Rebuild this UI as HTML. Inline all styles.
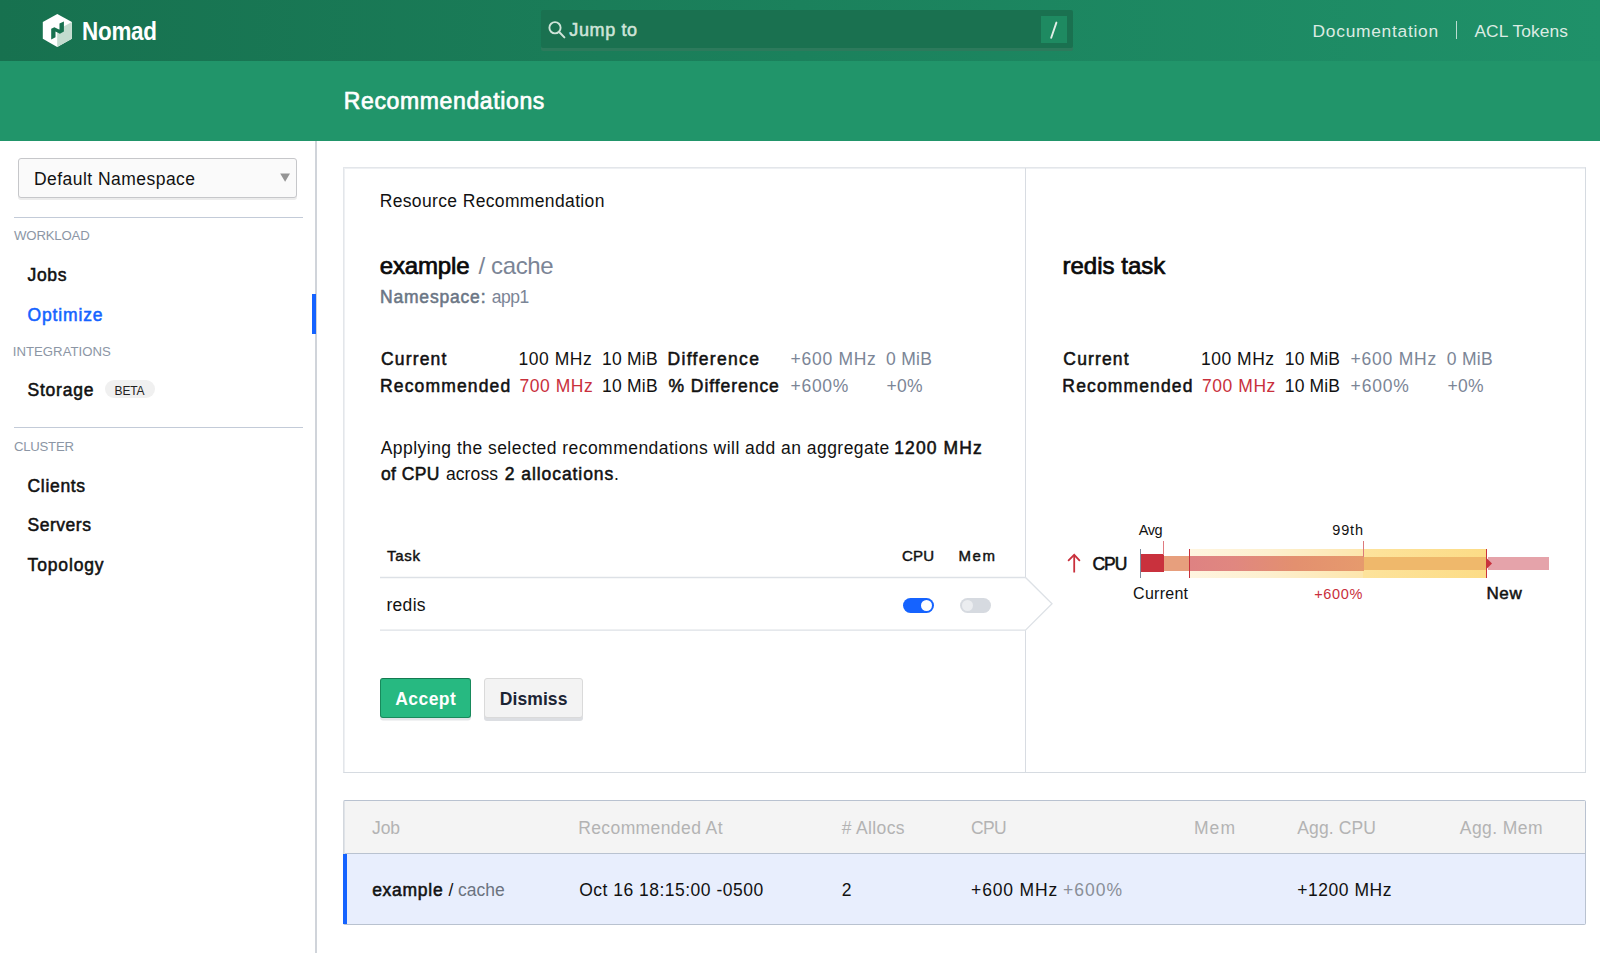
<!DOCTYPE html>
<html><head><meta charset="utf-8">
<style>
html,body{margin:0;padding:0;width:1600px;height:953px;overflow:hidden;background:#fff;}
body{position:relative;font-family:"Liberation Sans",sans-serif;}
.t{position:absolute;white-space:pre;line-height:1;}
.abs{position:absolute;}
</style></head><body>
<!-- top nav -->
<div class="abs" style="left:0;top:0;width:1600px;height:61px;background:linear-gradient(to right,#17714f,#1f9169);"></div>
<!-- secondary bar -->
<div class="abs" style="left:0;top:61px;width:1600px;height:80px;background:#21956a;"></div>
<!-- logo -->
<svg class="abs" style="left:40px;top:12px" width="36" height="38" viewBox="0 0 36 38">
  <polygon points="17.3,2 31.9,10 31.9,26.7 17.2,34.9 2.8,26.7 2.8,10" fill="#ffffff"/>
  <polygon points="17.2,18 31.9,10 31.9,26.7 17.2,34.9" fill="#c3dccf"/>
  <polygon points="11.2,16.7 14.4,15.2 19.5,17.7 19.5,11.6 23.9,9.4 23.9,19.5 19.9,21.7 15.5,19.6 15.5,25.3 11.2,27.5" fill="#17714f"/>
</svg>
<div class="abs" id="logo" style="left:81.5px;top:16px;color:#fff;font:bold 25.5px 'Liberation Sans',sans-serif;line-height:30px;transform:scaleX(0.88);transform-origin:0 0;letter-spacing:-0.3px">Nomad</div>
<!-- search -->
<div class="abs" style="left:541px;top:10px;width:532px;height:38px;background:#1a7150;border-radius:2px;box-shadow:0 3px 0 #2d7a5c;"></div>
<div class="abs" style="left:1041px;top:16px;width:26px;height:27px;background:#1e8a61;"></div>
<svg class="abs" style="left:1040px;top:16px" width="28" height="28" viewBox="0 0 28 28"><line x1="16.4" y1="6.6" x2="11.2" y2="21.8" stroke="#e2eee7" stroke-width="1.9" stroke-linecap="round"/></svg>
<svg class="abs" style="left:546px;top:19px" width="22" height="22" viewBox="0 0 22 22">
  <circle cx="9" cy="8.75" r="5.6" fill="none" stroke="#cfe4d9" stroke-width="1.9"/>
  <line x1="13.2" y1="13" x2="18.4" y2="18.4" stroke="#cfe4d9" stroke-width="2" stroke-linecap="round"/>
</svg>
<div class="abs" style="left:1455.5px;top:21px;width:1px;height:18px;background:rgba(255,255,255,0.7);"></div>

<!-- sidebar -->
<div class="abs" style="left:315px;top:141px;width:2px;height:812px;background:#d0d4da;"></div>
<div class="abs" style="left:312px;top:294px;width:4px;height:40px;background:#1563ff;"></div>
<div class="abs" style="left:18px;top:158.2px;width:276.6px;height:37.6px;background:#fafafa;border:1.5px solid #c6c7ca;border-radius:3px;box-shadow:0 2px 0 rgba(10,10,10,0.08);"></div>
<svg class="abs" style="left:278px;top:171px" width="14" height="12" viewBox="0 0 14 12"><polygon points="2.2,2.6 12,2.6 7.1,10.8" fill="#959595"/></svg>
<div class="abs" style="left:14px;top:217px;width:289px;height:1px;background:#c3cbd8;"></div>
<div class="abs" style="left:14px;top:427px;width:289px;height:1px;background:#c3cbd8;"></div>
<div class="abs" style="left:105px;top:380px;width:50px;height:18px;background:#f0f0f0;border-radius:9px;"></div>

<!-- card -->
<div class="abs" style="left:343px;top:167px;width:1241px;height:604px;border-top:1px solid #e3e6ea;border-left:1px solid #e3e6ea;border-right:1px solid #d6dbe1;border-bottom:1px solid #d6dbe1;box-shadow:inset 1px 1px 0 #eef0f3;"></div>
<div class="abs" style="left:1025px;top:168px;width:1px;height:604px;background:#d8dce2;"></div>
<!-- task table lines + arrow -->
<svg class="abs" style="left:0;top:0" width="1600" height="953">
  <polyline points="380,577.5 1025.5,577.5 1052,603.8 1025.5,630.2 380,630.2" fill="#fff" stroke="#dde1e6" stroke-width="1.3"/>
</svg>
<!-- toggles -->
<div class="abs" style="left:903px;top:598px;width:31px;height:15px;border-radius:8px;background:#1563ff;"></div>
<div class="abs" style="left:921px;top:600px;width:11px;height:11px;border-radius:50%;background:#fff;"></div>
<div class="abs" style="left:960px;top:598px;width:31px;height:15px;border-radius:8px;background:#d6dae0;"></div>
<div class="abs" style="left:962px;top:600px;width:11px;height:11px;border-radius:50%;background:#ebedf0;"></div>
<!-- buttons -->
<div class="abs" style="left:380px;top:678px;width:89px;height:38px;background:#27b981;border:1px solid #188a5c;border-top-color:#147a50;border-radius:3px;box-shadow:0 2.5px 0 #e3e5e8;"></div>
<div class="abs" style="left:484px;top:678px;width:97px;height:37.5px;background:#f3f3f3;border:1px solid #dadada;border-radius:3px;box-shadow:0 3px 0 #dcdee2;"></div>

<!-- chart -->
<svg class="abs" style="left:1060px;top:552px" width="24" height="24" viewBox="0 0 24 24">
  <path d="M14.2,3.2 L14.2,20.5" stroke="#c9303c" stroke-width="1.8" fill="none"/>
  <path d="M8.6,8.3 L14.2,2.8 L19.4,8.3" stroke="#c9303c" stroke-width="1.8" fill="none" stroke-linecap="round"/>
</svg>
<div class="abs" style="left:1190px;top:549px;width:173px;height:29px;background:linear-gradient(to right,#fff5e0,#fdf0cf 45%,#fde6ad);"></div>
<div class="abs" style="left:1363px;top:549px;width:124px;height:29px;background:linear-gradient(to right,#fde39c,#fcdc86);"></div>
<div class="abs" style="left:1164px;top:556px;width:26px;height:14.5px;background:#e79f7d;"></div>
<div class="abs" style="left:1190px;top:556px;width:174px;height:14.5px;background:linear-gradient(to right,#de8282,#e08780 25%,#e3906f 60%,#e69a6d);"></div>
<div class="abs" style="left:1364px;top:557px;width:123px;height:12.7px;background:#efb86b;"></div>
<div class="abs" style="left:1140px;top:554px;width:24px;height:18px;background:#c9313d;"></div>
<div class="abs" style="left:1139.5px;top:549px;width:1.2px;height:29px;background:#7d8a9c;"></div>
<div class="abs" style="left:1163px;top:541px;width:1px;height:14px;background:#e07a80;"></div>
<div class="abs" style="left:1189px;top:549px;width:1px;height:29px;background:#c9313d;"></div>
<div class="abs" style="left:1363px;top:541px;width:1px;height:16px;background:#dc7a7c;"></div>
<div class="abs" style="left:1486px;top:549px;width:1px;height:29px;background:#c9313d;"></div>
<div class="abs" style="left:1487.5px;top:557px;width:61.5px;height:13px;background:#e5a3aa;"></div>
<svg class="abs" style="left:1487px;top:557px" width="6" height="13" viewBox="0 0 6 13"><polygon points="0,1.5 5,6.5 0,11.5" fill="#c9313d"/></svg>

<!-- bottom table -->
<div class="abs" style="left:343px;top:800px;width:1241px;height:123px;border:1px solid #b9c2d0;border-left-color:#d3d7dd;border-radius:2px;background:#e8eefd;box-shadow:inset 1px 0 0 #dfe3e8;"></div>
<div class="abs" style="left:345px;top:801px;width:1240px;height:52px;background:#f4f4f4;border-bottom:1px solid #b9c2d0;"></div>
<div class="abs" style="left:343px;top:854px;width:4px;height:70px;background:#1563ff;"></div>
<span class="t" id="h_jump" style="left:569.27px;top:21.30px;font-size:18px;font-weight:400;color:#cfe4d9;-webkit-text-stroke:0.54px #cfe4d9;letter-spacing:0.624px;">Jump to</span>
<span class="t" id="h_doc" style="left:1312.60px;top:22.71px;font-size:17.4px;font-weight:400;color:#dcebe3;letter-spacing:0.708px;">Documentation</span>
<span class="t" id="h_acl" style="left:1474.40px;top:22.71px;font-size:17.4px;font-weight:400;color:#dcebe3;letter-spacing:0.081px;">ACL Tokens</span>
<span class="t" id="title" style="left:343.75px;top:90.05px;font-size:23px;font-weight:400;color:#ffffff;-webkit-text-stroke:0.69px #ffffff;letter-spacing:0.632px;">Recommendations</span>
<span class="t" id="s_ns" style="left:34.00px;top:170.82px;font-size:17.5px;font-weight:400;color:#111111;letter-spacing:0.459px;">Default Namespace</span>
<span class="t" id="s_wl" style="left:14.10px;top:229.48px;font-size:13.2px;font-weight:400;color:#8c96a5;letter-spacing:-0.187px;">WORKLOAD</span>
<span class="t" id="s_jobs" style="left:27.56px;top:267.12px;font-size:17.5px;font-weight:400;color:#111111;-webkit-text-stroke:0.53px #111111;letter-spacing:0.653px;">Jobs</span>
<span class="t" id="s_opt" style="left:27.56px;top:306.62px;font-size:17.5px;font-weight:400;color:#1563ff;-webkit-text-stroke:0.53px #1563ff;letter-spacing:0.852px;">Optimize</span>
<span class="t" id="s_int" style="left:12.70px;top:344.88px;font-size:13.2px;font-weight:400;color:#8c96a5;letter-spacing:0.024px;">INTEGRATIONS</span>
<span class="t" id="s_sto" style="left:27.56px;top:382.23px;font-size:17.5px;font-weight:400;color:#111111;-webkit-text-stroke:0.53px #111111;letter-spacing:0.769px;">Storage</span>
<span class="t" id="s_beta" style="left:114.60px;top:384.80px;font-size:12px;font-weight:400;color:#222222;letter-spacing:-0.216px;">BETA</span>
<span class="t" id="s_clu" style="left:13.90px;top:439.78px;font-size:13.2px;font-weight:400;color:#8c96a5;letter-spacing:-0.238px;">CLUSTER</span>
<span class="t" id="s_cli" style="left:27.56px;top:477.52px;font-size:17.5px;font-weight:400;color:#111111;-webkit-text-stroke:0.53px #111111;letter-spacing:0.672px;">Clients</span>
<span class="t" id="s_ser" style="left:27.56px;top:517.12px;font-size:17.5px;font-weight:400;color:#111111;-webkit-text-stroke:0.53px #111111;letter-spacing:0.522px;">Servers</span>
<span class="t" id="s_top" style="left:27.56px;top:556.83px;font-size:17.5px;font-weight:400;color:#111111;-webkit-text-stroke:0.53px #111111;letter-spacing:0.853px;">Topology</span>
<span class="t" id="c_rr" style="left:379.70px;top:193.12px;font-size:17.5px;font-weight:400;color:#111111;letter-spacing:0.355px;">Resource Recommendation</span>
<span class="t" id="c_ex" style="left:379.86px;top:254.00px;font-size:24px;font-weight:400;color:#0a0a0a;-webkit-text-stroke:0.72px #0a0a0a;letter-spacing:-0.181px;">example</span>
<span class="t" id="c_cache" style="left:478.50px;top:254.00px;font-size:24px;font-weight:400;color:#7b8596;letter-spacing:-0.372px;">/ cache</span>
<span class="t" id="c_nsl" style="left:379.96px;top:289.32px;font-size:17.5px;font-weight:400;color:#6b7685;-webkit-text-stroke:0.53px #6b7685;letter-spacing:0.811px;">Namespace:</span>
<span class="t" id="c_nsv" style="left:491.70px;top:289.32px;font-size:17.5px;font-weight:400;color:#7b8596;letter-spacing:-0.499px;">app1</span>
<span class="t" id="c_cur" style="left:380.96px;top:351.32px;font-size:17.5px;font-weight:400;color:#111111;-webkit-text-stroke:0.53px #111111;letter-spacing:1.164px;">Current</span>
<span class="t" id="c_rec" style="left:379.96px;top:378.12px;font-size:17.5px;font-weight:400;color:#111111;-webkit-text-stroke:0.53px #111111;letter-spacing:1.154px;">Recommended</span>
<span class="t" id="c_c1" style="left:518.50px;top:351.32px;font-size:17.5px;font-weight:400;color:#111111;letter-spacing:0.537px;">100 MHz</span>
<span class="t" id="c_c2" style="left:602.00px;top:351.32px;font-size:17.5px;font-weight:400;color:#111111;letter-spacing:0.241px;">10 MiB</span>
<span class="t" id="c_r1" style="left:519.50px;top:378.12px;font-size:17.5px;font-weight:400;color:#c9303c;letter-spacing:0.537px;">700 MHz</span>
<span class="t" id="c_r2" style="left:602.00px;top:378.12px;font-size:17.5px;font-weight:400;color:#111111;letter-spacing:0.241px;">10 MiB</span>
<span class="t" id="c_d" style="left:667.46px;top:351.32px;font-size:17.5px;font-weight:400;color:#111111;-webkit-text-stroke:0.53px #111111;letter-spacing:1.330px;">Difference</span>
<span class="t" id="c_pd" style="left:668.46px;top:378.12px;font-size:17.5px;font-weight:400;color:#111111;-webkit-text-stroke:0.53px #111111;letter-spacing:0.958px;">% Difference</span>
<span class="t" id="c_d1" style="left:790.60px;top:351.32px;font-size:17.5px;font-weight:400;color:#7b8596;letter-spacing:0.701px;">+600 MHz</span>
<span class="t" id="c_d2" style="left:885.90px;top:351.32px;font-size:17.5px;font-weight:400;color:#7b8596;letter-spacing:0.335px;">0 MiB</span>
<span class="t" id="c_pd1" style="left:790.60px;top:378.12px;font-size:17.5px;font-weight:400;color:#7b8596;letter-spacing:0.696px;">+600%</span>
<span class="t" id="c_pd2" style="left:886.60px;top:378.12px;font-size:17.5px;font-weight:400;color:#7b8596;letter-spacing:0.174px;">+0%</span>
<span class="t" id="c_p1" style="left:380.70px;top:439.73px;font-size:17.5px;font-weight:400;color:#111111;letter-spacing:0.467px;">Applying the selected recommendations will add an aggregate</span>
<span class="t" id="c_p1b" style="left:894.26px;top:439.73px;font-size:17.5px;font-weight:400;color:#111111;-webkit-text-stroke:0.53px #111111;letter-spacing:1.095px;">1200 MHz</span>
<span class="t" id="c_p2a" style="left:380.96px;top:466.23px;font-size:17.5px;font-weight:400;color:#111111;-webkit-text-stroke:0.53px #111111;letter-spacing:0.422px;">of CPU</span>
<span class="t" id="c_p2b" style="left:445.90px;top:466.23px;font-size:17.5px;font-weight:400;color:#111111;letter-spacing:0.121px;">across</span>
<span class="t" id="c_p2c" style="left:504.76px;top:466.23px;font-size:17.5px;font-weight:400;color:#111111;-webkit-text-stroke:0.53px #111111;letter-spacing:0.937px;">2 allocations</span>
<span class="t" id="c_p2d" style="left:614.00px;top:466.23px;font-size:17.5px;font-weight:400;color:#111111;">.</span>
<span class="t" id="c_task" style="left:387.03px;top:548.45px;font-size:15px;font-weight:400;color:#111111;-webkit-text-stroke:0.45px #111111;letter-spacing:0.736px;">Task</span>
<span class="t" id="c_cpu" style="left:902.12px;top:548.45px;font-size:15px;font-weight:400;color:#111111;-webkit-text-stroke:0.45px #111111;letter-spacing:0.106px;">CPU</span>
<span class="t" id="c_mem" style="left:958.52px;top:548.45px;font-size:15px;font-weight:400;color:#111111;-webkit-text-stroke:0.45px #111111;letter-spacing:1.556px;">Mem</span>
<span class="t" id="c_redis" style="left:386.50px;top:596.92px;font-size:17.5px;font-weight:400;color:#111111;letter-spacing:0.280px;">redis</span>
<span class="t" id="c_acc" style="left:395.20px;top:690.62px;font-size:17.5px;font-weight:700;color:#ffffff;letter-spacing:0.455px;">Accept</span>
<span class="t" id="c_dis" style="left:499.70px;top:690.62px;font-size:17.5px;font-weight:700;color:#1b2434;letter-spacing:0.102px;">Dismiss</span>
<span class="t" id="r_title" style="left:1062.46px;top:253.50px;font-size:24px;font-weight:400;color:#0a0a0a;-webkit-text-stroke:0.72px #0a0a0a;letter-spacing:0.020px;">redis task</span>
<span class="t" id="r_cur" style="left:1063.36px;top:351.23px;font-size:17.5px;font-weight:400;color:#111111;-webkit-text-stroke:0.53px #111111;letter-spacing:1.131px;">Current</span>
<span class="t" id="r_rec" style="left:1062.36px;top:378.12px;font-size:17.5px;font-weight:400;color:#111111;-webkit-text-stroke:0.53px #111111;letter-spacing:1.134px;">Recommended</span>
<span class="t" id="r_c1" style="left:1201.00px;top:351.23px;font-size:17.5px;font-weight:400;color:#111111;letter-spacing:0.504px;">100 MHz</span>
<span class="t" id="r_r1" style="left:1202.00px;top:378.12px;font-size:17.5px;font-weight:400;color:#c9303c;letter-spacing:0.554px;">700 MHz</span>
<span class="t" id="r_c2" style="left:1284.80px;top:351.23px;font-size:17.5px;font-weight:400;color:#111111;letter-spacing:0.121px;">10 MiB</span>
<span class="t" id="r_r2" style="left:1284.80px;top:378.12px;font-size:17.5px;font-weight:400;color:#111111;letter-spacing:0.121px;">10 MiB</span>
<span class="t" id="r_d1" style="left:1350.60px;top:351.23px;font-size:17.5px;font-weight:400;color:#7b8596;letter-spacing:0.758px;">+600 MHz</span>
<span class="t" id="r_d2" style="left:1446.80px;top:351.23px;font-size:17.5px;font-weight:400;color:#7b8596;letter-spacing:0.285px;">0 MiB</span>
<span class="t" id="r_pd1" style="left:1350.60px;top:378.12px;font-size:17.5px;font-weight:400;color:#7b8596;letter-spacing:0.821px;">+600%</span>
<span class="t" id="r_pd2" style="left:1447.50px;top:378.12px;font-size:17.5px;font-weight:400;color:#7b8596;letter-spacing:0.274px;">+0%</span>
<span class="t" id="g_avg" style="left:1138.70px;top:523.27px;font-size:14.5px;font-weight:400;color:#111111;letter-spacing:-0.430px;">Avg</span>
<span class="t" id="g_99" style="left:1332.30px;top:523.27px;font-size:14.5px;font-weight:400;color:#111111;letter-spacing:0.814px;">99th</span>
<span class="t" id="g_cpu" style="left:1092.46px;top:556.02px;font-size:17.5px;font-weight:400;color:#111111;-webkit-text-stroke:0.53px #111111;letter-spacing:-1.018px;">CPU</span>
<span class="t" id="g_cur" style="left:1133.10px;top:586.15px;font-size:16px;font-weight:400;color:#111111;letter-spacing:0.266px;">Current</span>
<span class="t" id="g_pct" style="left:1314.30px;top:587.42px;font-size:14.5px;font-weight:400;color:#c9303c;letter-spacing:0.610px;">+600%</span>
<span class="t" id="g_new" style="left:1486.46px;top:585.45px;font-size:17px;font-weight:400;color:#111111;-webkit-text-stroke:0.51px #111111;letter-spacing:0.629px;">New</span>
<span class="t" id="b_job" style="left:371.90px;top:819.83px;font-size:17.5px;font-weight:400;color:#b3b3b3;">Job</span>
<span class="t" id="b_rat" style="left:578.20px;top:819.83px;font-size:17.5px;font-weight:400;color:#b3b3b3;letter-spacing:0.400px;">Recommended At</span>
<span class="t" id="b_all" style="left:841.70px;top:819.83px;font-size:17.5px;font-weight:400;color:#b3b3b3;letter-spacing:0.368px;"># Allocs</span>
<span class="t" id="b_cpu" style="left:971.10px;top:819.83px;font-size:17.5px;font-weight:400;color:#b3b3b3;letter-spacing:-0.655px;">CPU</span>
<span class="t" id="b_mem" style="left:1194.00px;top:819.83px;font-size:17.5px;font-weight:400;color:#b3b3b3;letter-spacing:1.045px;">Mem</span>
<span class="t" id="b_acpu" style="left:1297.30px;top:819.83px;font-size:17.5px;font-weight:400;color:#b3b3b3;letter-spacing:0.118px;">Agg. CPU</span>
<span class="t" id="b_amem" style="left:1459.80px;top:819.83px;font-size:17.5px;font-weight:400;color:#b3b3b3;letter-spacing:0.418px;">Agg. Mem</span>
<span class="t" id="b_ex" style="left:372.16px;top:881.73px;font-size:17.5px;font-weight:400;color:#111111;-webkit-text-stroke:0.53px #111111;letter-spacing:0.727px;">example</span>
<span class="t" id="b_sl" style="left:448.50px;top:881.73px;font-size:17.5px;font-weight:400;color:#111111;">/</span>
<span class="t" id="b_cache" style="left:458.00px;top:881.73px;font-size:17.5px;font-weight:400;color:#6b7380;">cache</span>
<span class="t" id="b_date" style="left:579.20px;top:881.73px;font-size:17.5px;font-weight:400;color:#111111;letter-spacing:0.489px;">Oct 16 18:15:00 -0500</span>
<span class="t" id="b_2" style="left:841.70px;top:881.73px;font-size:17.5px;font-weight:400;color:#111111;">2</span>
<span class="t" id="b_cpuv" style="left:971.10px;top:881.73px;font-size:17.5px;font-weight:400;color:#111111;letter-spacing:0.829px;">+600 MHz</span>
<span class="t" id="b_cpup" style="left:1062.90px;top:881.73px;font-size:17.5px;font-weight:400;color:#8a8f98;letter-spacing:1.021px;">+600%</span>
<span class="t" id="b_agg" style="left:1297.30px;top:881.73px;font-size:17.5px;font-weight:400;color:#111111;letter-spacing:0.534px;">+1200 MHz</span>
</body></html>
